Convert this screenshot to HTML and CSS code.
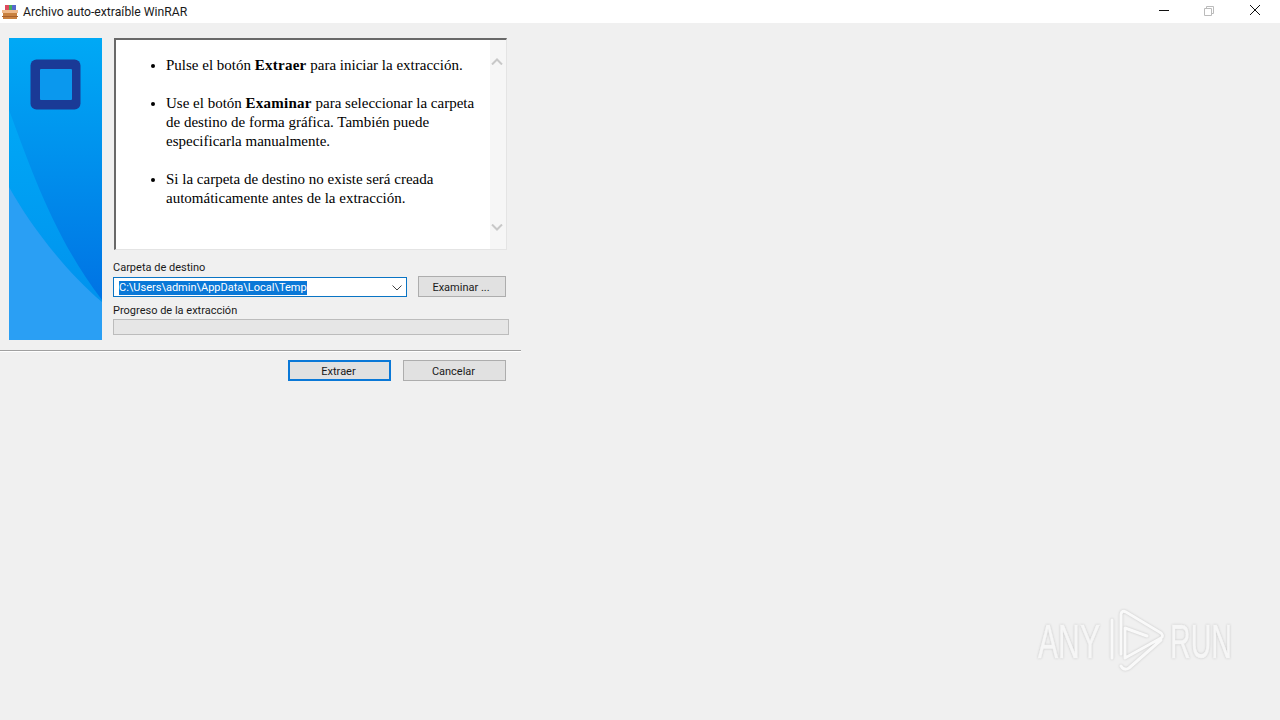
FILE: index.html
```html
<!DOCTYPE html>
<html lang="es">
<head>
<meta charset="utf-8">
<title>Archivo auto-extraíble WinRAR</title>
<link rel="stylesheet" href="styles.css">
</head>
<body>
<header class="titlebar">
  <svg class="app-icon" width="16" height="16" viewBox="0 0 16 16">
    <rect x="1" y="8" width="14" height="7" fill="#c9813f"/>
    <rect x="0" y="6" width="16" height="3" fill="#efb98a"/>
    <rect x="0" y="12" width="16" height="1" fill="#a8602c"/>
    <rect x="3" y="1" width="4" height="5" fill="#de4a5e"/>
    <rect x="7" y="1" width="3" height="5" fill="#44ad62"/>
    <rect x="10" y="1" width="4" height="5" fill="#5668cc"/>
  </svg>
  <span class="title">Archivo auto-extraíble WinRAR</span>
  <div class="win-controls">
    <svg class="win-btn" width="46" height="21" viewBox="0 0 46 21"><path d="M18 10.5h10" stroke="#111" fill="none" transform="translate(-1 0)"/></svg>
    <svg class="win-btn" width="46" height="21" viewBox="0 0 46 21"><path d="M17.5 8.5h7v7h-7zM19.5 8.5v-2h7v7h-2" stroke="#bbb" fill="none"/></svg>
    <svg class="win-btn" width="46" height="21" viewBox="0 0 46 21"><path d="M18 5l10 10M28 5l-10 10" stroke="#111" fill="none"/></svg>
  </div>
</header>

<main class="dialog">
  <div class="content">
    <svg class="side" width="93" height="302" viewBox="0 0 93 302">
      <defs>
        <linearGradient id="bg" x1="0" y1="0" x2="0" y2="1">
          <stop offset="0" stop-color="#00a9f5"/>
          <stop offset="0.3" stop-color="#0097ef"/>
          <stop offset="0.85" stop-color="#0074e4"/>
        </linearGradient>
        <linearGradient id="mid" x1="0" y1="0" x2="0" y2="1">
          <stop offset="0" stop-color="#00a8f6"/>
          <stop offset="1" stop-color="#008eec"/>
        </linearGradient>
      </defs>
      <rect width="93" height="302" fill="url(#bg)"/>
      <path d="M0 72C20 125 45 200 93 262V302H0Z" fill="url(#mid)"/>
      <path d="M0 149C20 185 55 232 93 264V302H0Z" fill="#2a9ff4"/>
      <rect x="21.5" y="21.5" width="50" height="50" rx="6" fill="#1a3a96"/>
      <rect x="31" y="31" width="32" height="31" rx="1" fill="#0a98ee"/>
    </svg>
    <div class="form">
      <div class="infobox">
        <ul class="notes">
          <li>Pulse el botón <b>Extraer</b> para iniciar la extracción.</li>
          <li>Use el botón <b>Examinar</b> para seleccionar la carpeta de destino de forma gráfica. También puede especificarla manualmente.</li>
          <li>Si la carpeta de destino no existe será creada automáticamente antes de la extracción.</li>
        </ul>
        <div class="scroll">
          <svg width="12" height="7" viewBox="0 0 12 7"><path d="M1 6.5l5-5 5 5" stroke="#c8c8c8" stroke-width="2" fill="none"/></svg>
          <svg width="12" height="7" viewBox="0 0 12 7"><path d="M1 .5l5 5 5-5" stroke="#c8c8c8" stroke-width="2" fill="none"/></svg>
        </div>
      </div>
      <div class="label label-dest">Carpeta de destino</div>
      <div class="dest-row">
        <div class="combo">
          <span class="path">C:\Users\admin\AppData\Local\Temp</span>
          <svg width="10" height="6" viewBox="0 0 10 6"><path d="M.5 .5l4.5 4.5 4.5-4.5" stroke="#444" fill="none"/></svg>
        </div>
        <button class="btn btn-browse">Examinar ...</button>
      </div>
      <div class="label label-prog">Progreso de la extracción</div>
      <div class="progress"></div>
    </div>
  </div>
  <hr class="sep">
  <div class="actions">
    <button class="btn btn-main primary">Extraer</button>
    <button class="btn btn-main">Cancelar</button>
  </div>
</main>

<svg class="watermark" width="200" height="70" viewBox="0 0 200 70">
  <text class="wm-text" x="1" y="50" textLength="62" lengthAdjust="spacingAndGlyphs">ANY</text>
  <path class="wm-logo" d="M75 12V50M84 46V6Q85 2 89 4L124 25Q127 28 124 30L88 50V20L110 28M124 32L92 60Q87 63 84 58"/>
  <text class="wm-text" x="133" y="50" textLength="62" lengthAdjust="spacingAndGlyphs">RUN</text>
</svg>
</body>
</html>
```
FILE: styles.css
```css
* { box-sizing: border-box; }
html, body { margin: 0; height: 100%; }
body {
  background: #f0f0f0;
  font-family: Roboto, "Noto Sans", sans-serif;
  font-size: 11px;
  color: #1a1a1a;
  overflow: hidden;
  position: relative;
}
.titlebar {
  height: 23px;
  background: #fff;
  display: flex;
  align-items: center;
  padding-left: 2px;
}
.app-icon { margin-right: 5px; }
.title { font-size: 12.2px; }
.win-controls { margin-left: auto; display: flex; margin-right: 2px; align-self: flex-start; }
.win-btn { display: block; margin-left: -1px; }
.dialog { width: 521px; padding-top: 15px; }
.content { display: flex; padding-left: 9px; }
.side { display: block; flex: none; }
.form { margin-left: 11px; width: 396px; }
.infobox {
  margin-left: 1px;
  width: 393px;
  height: 212px;
  background: #fff;
  border: 1px solid #e4e4e4;
  border-top: 2px solid #696969;
  border-left: 2px solid #696969;
  display: flex;
}
.notes {
  flex: 1;
  margin: 0;
  padding: 16px 0 0 50px;
  font-family: "Liberation Serif", "Times New Roman", serif;
  font-size: 15px;
  line-height: 19px;
  color: #000;
}
.notes li { margin-bottom: 19px; padding-right: 10px; }
.notes b { letter-spacing: .25px; }
.scroll {
  width: 16px;
  background: #f6f6f6;
  flex: none;
  display: flex;
  flex-direction: column;
  align-items: center;
  justify-content: space-between;
  padding: 18px 2px 18px 0;
}
.scroll svg { display: block; }
.label { line-height: 14px; white-space: nowrap; }
.label-dest { margin-top: 11px; }
.label-prog { margin-top: 7px; }
.dest-row { display: flex; align-items: flex-start; margin-top: 1px; }
.combo {
  width: 294px;
  height: 20px;
  margin-top: 1px;
  background: #fff;
  border: 1px solid #0a74c4;
  display: flex;
  align-items: center;
  justify-content: space-between;
  padding: 2px 4px 0 5px;
}
.path { background: #0a78d7; color: #fff; line-height: 14px; }
.btn {
  font: inherit;
  color: #1a1a1a;
  background: #e1e1e1;
  border: 1px solid #adadad;
  padding: 2px 2px 0 0;
  display: block;
}
.btn-browse { width: 88px; height: 21px; margin-left: 11px; }
.progress {
  height: 16px;
  width: 396px;
  margin-top: 1px;
  background: #e6e6e6;
  border: 1px solid #bcbcbc;
}
.sep { margin: 10px 0 0; border: 0; border-top: 1px solid #a0a0a0; border-bottom: 1px solid #fff; height: 2px; }
.actions { display: flex; justify-content: flex-end; gap: 12px; padding: 8px 15px 0 0; }
.btn-main { width: 103px; height: 21px; }
.primary { border: 2px solid #0a78d7; }
.watermark {
  position: absolute;
  left: 1037px;
  top: 608px;
  overflow: visible;
  filter: drop-shadow(0 0 1px #c4c4c4);
}
.wm-text {
  font-family: "Liberation Sans", sans-serif;
  font-size: 48px;
  fill: #f6f6f6;
  stroke: #f6f6f6;
  stroke-width: .6;
}
.wm-logo {
  fill: none;
  stroke: #f9f9f9;
  stroke-width: 3;
  stroke-linejoin: round;
  stroke-linecap: round;
}
```
